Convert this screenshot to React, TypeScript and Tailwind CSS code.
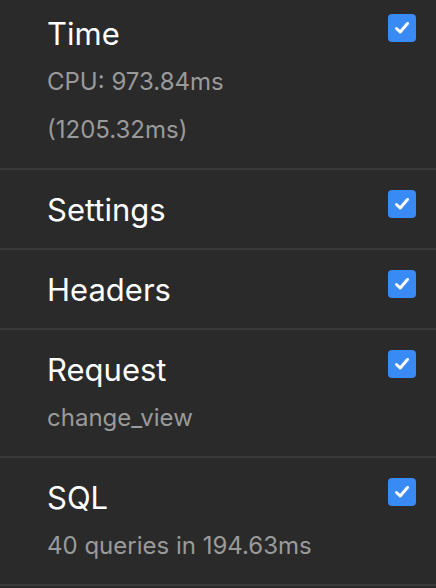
import React from "react";

type Row = { title: string; subs: string[] };

const rows: Row[] = [
  { title: "Time", subs: ["CPU: 973.84ms", "(1205.32ms)"] },
  { title: "Settings", subs: [] },
  { title: "Headers", subs: [] },
  { title: "Request", subs: ["change_view"] },
  { title: "SQL", subs: ["40 queries in 194.63ms"] },
];

function Check() {
  return (
    <div className="w-[28px] h-[28px] rounded-[4px] bg-[#3a8af6] flex items-center justify-center">
      <svg width="18" height="18" viewBox="0 0 18 18" fill="none">
        <path
          d="M3.5 9.5 L7.2 13 L14.5 4.5"
          stroke="white"
          strokeWidth="3"
          strokeLinecap="round"
          strokeLinejoin="round"
        />
      </svg>
    </div>
  );
}

export default function App() {
  return (
    <div
      className="w-[436px] h-[588px] overflow-hidden bg-[#2a2a2a]"
      style={{ fontFamily: "Inter, 'Noto Sans', sans-serif" }}
    >
      <div className="mt-[-6px]">
        {rows.map((r) => (
          <div
            key={r.title}
            className="flex justify-between pl-[47px] pr-[20px] pt-[16px] pb-[14px] border-b-2 border-[#3a3a3a]"
          >
            <div className="flex flex-col">
              <div className="text-[31px] leading-[48px] text-white">{r.title}</div>
              {r.subs.map((s) => (
                <div key={s} className="text-[24px] leading-[48px] text-[#9a9a9a]">
                  {s}
                </div>
              ))}
            </div>
            <div className="pt-[4px]">
              <Check />
            </div>
          </div>
        ))}
      </div>
    </div>
  );
}
